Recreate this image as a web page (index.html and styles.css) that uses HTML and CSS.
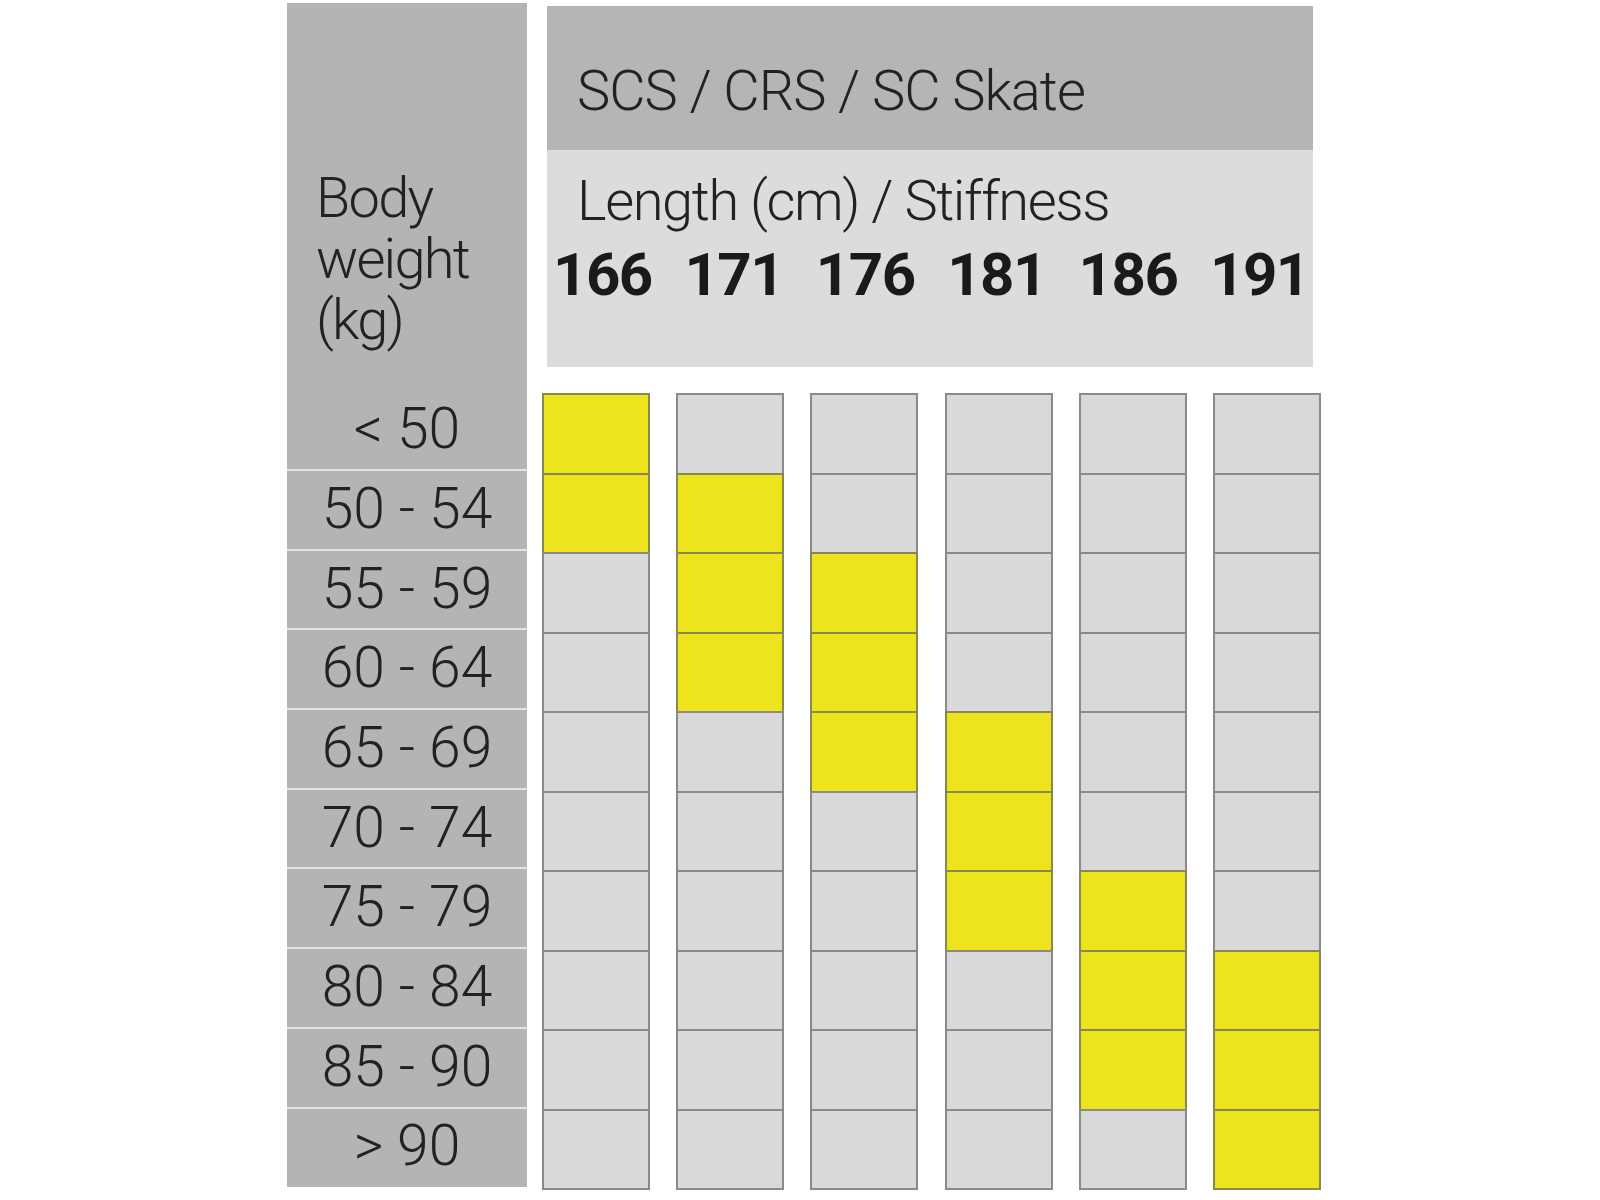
FILE: index.html
```html
<!DOCTYPE html>
<html lang="en">
<head>
<meta charset="utf-8">
<title>SCS / CRS / SC Skate size chart</title>
<link rel="stylesheet" href="styles.css">
</head>
<body>
<div class="chart">
  <div class="weights">
    <div class="weights-head">
      <div class="title">Body<br>weight<br>(kg)</div>
      <div class="wlabel">&lt; 50</div>
    </div>
    <div class="wrow">50 - 54</div>
    <div class="wrow">55 - 59</div>
    <div class="wrow">60 - 64</div>
    <div class="wrow">65 - 69</div>
    <div class="wrow">70 - 74</div>
    <div class="wrow">75 - 79</div>
    <div class="wrow">80 - 84</div>
    <div class="wrow">85 - 90</div>
    <div class="wrow">&gt; 90</div>
  </div>
  <div class="main">
    <div class="header">
      <div class="model">SCS / CRS / SC Skate</div>
      <div class="spec">
        <div class="spec-title">Length (cm) / Stiffness</div>
        <div class="lengths">
          <span>166</span><span>171</span><span>176</span><span>181</span><span>186</span><span>191</span>
        </div>
      </div>
    </div>
    <div class="grid">
      <div class="col">
        <div class="cell on"></div><div class="cell on"></div><div class="cell"></div><div class="cell"></div><div class="cell"></div>
        <div class="cell"></div><div class="cell"></div><div class="cell"></div><div class="cell"></div><div class="cell"></div>
      </div>
      <div class="col">
        <div class="cell"></div><div class="cell on"></div><div class="cell on"></div><div class="cell on"></div><div class="cell"></div>
        <div class="cell"></div><div class="cell"></div><div class="cell"></div><div class="cell"></div><div class="cell"></div>
      </div>
      <div class="col">
        <div class="cell"></div><div class="cell"></div><div class="cell on"></div><div class="cell on"></div><div class="cell on"></div>
        <div class="cell"></div><div class="cell"></div><div class="cell"></div><div class="cell"></div><div class="cell"></div>
      </div>
      <div class="col">
        <div class="cell"></div><div class="cell"></div><div class="cell"></div><div class="cell"></div><div class="cell on"></div>
        <div class="cell on"></div><div class="cell on"></div><div class="cell"></div><div class="cell"></div><div class="cell"></div>
      </div>
      <div class="col">
        <div class="cell"></div><div class="cell"></div><div class="cell"></div><div class="cell"></div><div class="cell"></div>
        <div class="cell"></div><div class="cell on"></div><div class="cell on"></div><div class="cell on"></div><div class="cell"></div>
      </div>
      <div class="col">
        <div class="cell"></div><div class="cell"></div><div class="cell"></div><div class="cell"></div><div class="cell"></div>
        <div class="cell"></div><div class="cell"></div><div class="cell on"></div><div class="cell on"></div><div class="cell on"></div>
      </div>
    </div>
  </div>
</div>
</body>
</html>
```

FILE: styles.css
```css
* { box-sizing: border-box; }

body {
  margin: 0;
  background: #ffffff;
  font-family: Roboto, "Liberation Sans", Arial, sans-serif;
  color: #222222;
}

.chart {
  display: flex;
  align-items: flex-start;
  padding: 3px 0 0 287px;
}

/* left weight column */
.weights {
  width: 240px;
  height: 1184px;
  background: #b3b4b6;
  display: flex;
  flex-direction: column;
}

.weights-head {
  height: 466px;
  display: flex;
  flex-direction: column;
  justify-content: space-between;
  padding-top: 165px;
}

.title {
  padding-left: 29px;
  font-size: 56px;
  line-height: 61px;
  font-weight: 300;
  letter-spacing: -1.8px;
}

.wlabel,
.wrow {
  display: flex;
  align-items: center;
  justify-content: center;
  font-size: 57px;
  font-weight: 300;
  padding-bottom: 3px;
}

.wlabel {
  height: 77.7px;
}

.wrow {
  height: 79.7px;
  border-top: 2px solid #e4e4e5;
}

/* right side */
.main {
  margin-left: 15px;
  width: 779px;
  display: flex;
  flex-direction: column;
}

.header {
  margin: 3px 8px 0 5px;
}

.model {
  height: 144px;
  background: #b4b5b7;
  padding: 57px 0 0 30px;
  font-size: 56px;
  line-height: 56px;
  font-weight: 300;
  letter-spacing: -1px;
  white-space: nowrap;
}

.spec {
  height: 217px;
  background: #dcdcdc;
  padding-top: 23px;
}

.spec-title {
  padding-left: 30px;
  font-size: 56px;
  line-height: 56px;
  font-weight: 300;
  letter-spacing: -1.4px;
  white-space: nowrap;
}

.lengths {
  display: flex;
  margin-top: 16px;
  padding-left: 6px;
  font-size: 60px;
  line-height: 60px;
  font-weight: 700;
  letter-spacing: -1.5px;
  color: #1a1a1a;
}

.lengths span {
  width: 131.4px;
  flex: none;
}

/* grid of cells */
.grid {
  margin-top: 26px;
  display: grid;
  grid-template-columns: repeat(6, 108px);
  column-gap: 26.2px;
}

.col {
  display: flex;
  flex-direction: column;
}

.cell {
  height: 81.5px;
  background: #d9d9d9;
  border: 2px solid #8a8a8a;
}

.cell + .cell {
  margin-top: -2px;
}

.cell.on {
  background: #eee41e;
  border-color: #8a8852;
}
```
